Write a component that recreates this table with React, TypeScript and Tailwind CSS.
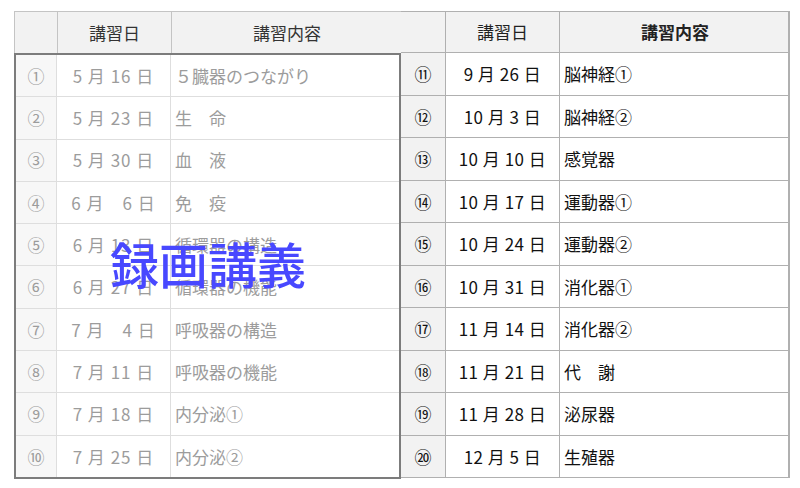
const early = [
  { no: "①", date: "5 月 16 日", topic: "５臓器のつながり" },
  { no: "②", date: "5 月 23 日", topic: "生　命" },
  { no: "③", date: "5 月 30 日", topic: "血　液" },
  { no: "④", date: "6 月　6 日", topic: "免　疫" },
  { no: "⑤", date: "6 月 13 日", topic: "循環器の構造" },
  { no: "⑥", date: "6 月 27 日", topic: "循環器の機能" },
  { no: "⑦", date: "7 月　4 日", topic: "呼吸器の構造" },
  { no: "⑧", date: "7 月 11 日", topic: "呼吸器の機能" },
  { no: "⑨", date: "7 月 18 日", topic: "内分泌①" },
  { no: "⑩", date: "7 月 25 日", topic: "内分泌②" },
];

const later = [
  { no: "⑪", date: "9 月 26 日", topic: "脳神経①" },
  { no: "⑫", date: "10 月 3 日", topic: "脳神経②" },
  { no: "⑬", date: "10 月 10 日", topic: "感覚器" },
  { no: "⑭", date: "10 月 17 日", topic: "運動器①" },
  { no: "⑮", date: "10 月 24 日", topic: "運動器②" },
  { no: "⑯", date: "10 月 31 日", topic: "消化器①" },
  { no: "⑰", date: "11 月 14 日", topic: "消化器②" },
  { no: "⑱", date: "11 月 21 日", topic: "代　謝" },
  { no: "⑲", date: "11 月 28 日", topic: "泌尿器" },
  { no: "⑳", date: "12 月 5 日", topic: "生殖器" },
];

const font = { fontFamily: '"Noto Sans CJK JP", "Noto Sans", sans-serif' };

const App = () => {
  return (
    <div className="w-[800px] h-[488px] bg-white pl-[14px] pt-[11px] text-[17px]" style={font}>
      <div className="flex">
        {/* first term, recorded */}
        <div className="w-[387px]">
          <div className="grid grid-cols-[43px_114px_230px] h-[42px] bg-[#f2f2f2] border-t border-l border-[#c4c4c4] text-[#333]">
            <div className="border-r border-[#c4c4c4]" />
            <div className="border-r border-[#c4c4c4] flex items-center justify-center">講習日</div>
            <div className="flex items-center justify-center">講習内容</div>
          </div>
          <div className="relative border-2 border-[#7c7c7c] h-[426px] flex flex-col text-[#9c9c9c]">
            {early.map((r, i) => (
              <div
                key={r.no}
                className={`grid grid-cols-[41px_114px_228px] flex-1 ${i < early.length - 1 ? "border-b border-[#dedede]" : ""}`}
              >
                <div className="bg-[#f7f7f7] border-r border-[#dedede] flex items-center justify-center">{r.no}</div>
                <div className="border-r border-[#dedede] flex items-center justify-center tracking-[1px]">{r.date}</div>
                <div className="flex items-center pl-[4px]">{r.topic}</div>
              </div>
            ))}
            <div className="absolute left-[94px] top-[183px] text-[49px] leading-none font-medium text-[#4848ff]">
              録画講義
            </div>
          </div>
        </div>

        {/* second term */}
        <div className="w-[389px] flex flex-col">
          <div className="grid grid-cols-[45px_114px_230px] h-[42px] bg-[#f2f2f2] border-t border-b border-r-2 border-[#b0b0b0] text-[#222]">
            <div className="border-r border-[#b0b0b0]" />
            <div className="border-r border-[#b0b0b0] flex items-center justify-center">講習日</div>
            <div className="flex items-center justify-center font-bold">講習内容</div>
          </div>
          <div className="h-[425px] flex flex-col border-b border-r-2 border-[#b0b0b0] text-[#111]">
            {later.map((r, i) => (
              <div
                key={r.no}
                className={`grid grid-cols-[45px_114px_228px] flex-1 ${i < later.length - 1 ? "border-b border-[#b0b0b0]" : ""}`}
              >
                <div className="bg-[#f2f2f2] border-r border-[#b0b0b0] flex items-center justify-center text-[17px]">{r.no}</div>
                <div className="border-r border-[#b0b0b0] flex items-center justify-center tracking-[0.5px]">{r.date}</div>
                <div className="flex items-center pl-[4px]">{r.topic}</div>
              </div>
            ))}
          </div>
        </div>
      </div>
    </div>
  );
};

export default App;
